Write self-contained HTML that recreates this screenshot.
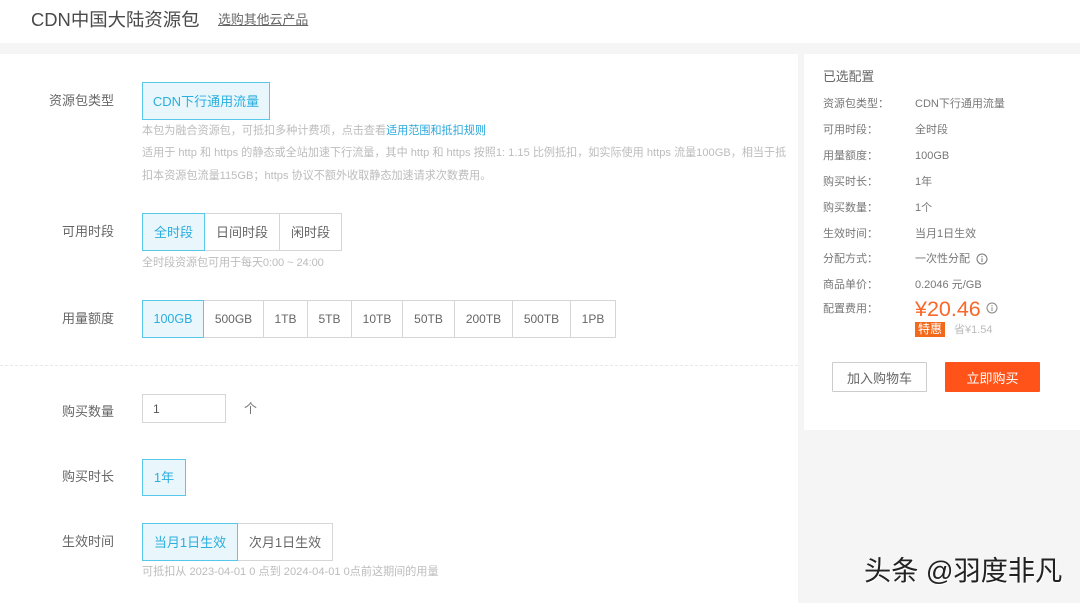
<!DOCTYPE html>
<html lang="zh"><head><meta charset="utf-8"><title>CDN中国大陆资源包</title>
<style>
*{box-sizing:border-box;margin:0;padding:0}
html,body{width:1080px;height:603px;overflow:hidden;background:#f5f5f5}
#w{position:absolute;left:0;top:0;width:1080px;height:603px;filter:blur(.35px);font-family:"Liberation Sans","Noto Sans CJK SC",sans-serif;color:#555}
.p{position:absolute;background:#fff}
.t{position:absolute;white-space:nowrap;line-height:18px}
.l{font-size:13px;color:#666;left:39px;width:75px;text-align:right}
.g{font-size:11.1px;color:#bcbcbc;left:142px}
.b{position:absolute;display:flex;align-items:center;justify-content:center;border:1px solid #d6d6d6;background:#fff;font-size:13px;color:#666;white-space:nowrap;padding-bottom:2px}
.s{font-size:12px;padding-bottom:0}
.n{padding-bottom:0}
.a{border-color:#58c8ea;background:#e9f7fd;color:#2aaede;z-index:2}
.k{font-size:11px;color:#777;left:823px}
.v{font-size:11px;color:#777;left:915px}
</style></head><body><div id="w">
<div class="p" style="left:0;top:0;width:1080px;height:43px"></div>
<div class="p" style="left:0;top:54px;width:798px;height:549px"></div>
<div class="p" style="left:804px;top:54px;width:276px;height:376px"></div>

<div class="t" style="left:31px;top:8px;font-size:18.4px;line-height:24px;color:#4a4a4a">CDN中国大陆资源包</div>
<div class="t" style="left:218px;top:11px;font-size:12.9px;color:#666;text-decoration:underline">选购其他云产品</div>

<div class="t l" style="top:92px">资源包类型</div>
<div class="b a" style="left:142px;top:82px;width:128px;height:38px">CDN下行通用流量</div>
<div class="t g" style="top:122px">本包为融合资源包，可抵扣多种计费项，点击查看<span style="color:#2aa8de">适用范围和抵扣规则</span></div>
<div class="t g" style="top:144px">适用于 http 和 https 的静态或全站加速下行流量，其中 http 和 https 按照1: 1.15 比例抵扣，如实际使用 https 流量100GB，相当于抵</div>
<div class="t g" style="top:167px">扣本资源包流量115GB；https 协议不额外收取静态加速请求次数费用。</div>

<div class="t l" style="top:223px">可用时段</div>
<div class="b a" style="left:142px;top:213px;width:63px;height:38px">全时段</div>
<div class="b" style="left:204px;top:213px;width:76px;height:38px">日间时段</div>
<div class="b" style="left:279px;top:213px;width:63px;height:38px">闲时段</div>
<div class="t g" style="top:254px;letter-spacing:-.1px">全时段资源包可用于每天0:00 ~ 24:00</div>

<div class="t l" style="top:310px">用量额度</div>
<div class="b a n" style="left:142px;top:300px;width:62px;height:38px;font-size:12.5px">100GB</div>
<div class="b s" style="left:203px;top:300px;width:61px;height:38px">500GB</div>
<div class="b s" style="left:263px;top:300px;width:45px;height:38px">1TB</div>
<div class="b s" style="left:307px;top:300px;width:45px;height:38px">5TB</div>
<div class="b s" style="left:351px;top:300px;width:52px;height:38px">10TB</div>
<div class="b s" style="left:402px;top:300px;width:53px;height:38px">50TB</div>
<div class="b s" style="left:454px;top:300px;width:59px;height:38px">200TB</div>
<div class="b s" style="left:512px;top:300px;width:59px;height:38px">500TB</div>
<div class="b s" style="left:570px;top:300px;width:46px;height:38px">1PB</div>

<div style="position:absolute;left:0;top:365px;width:798px;border-top:1px dashed #e8e8e8"></div>

<div class="t l" style="top:403px">购买数量</div>
<div class="b n" style="left:142px;top:394px;width:84px;height:29px;justify-content:flex-start;padding-left:10px;font-size:12px;color:#555">1</div>
<div class="t" style="left:244px;top:400px;font-size:13px;color:#777">个</div>

<div class="t l" style="top:468px">购买时长</div>
<div class="b a" style="left:142px;top:459px;width:44px;height:37px">1年</div>

<div class="t l" style="top:533px">生效时间</div>
<div class="b a" style="left:142px;top:523px;width:96px;height:38px">当月1日生效</div>
<div class="b" style="left:237px;top:523px;width:96px;height:38px">次月1日生效</div>
<div class="t g" style="top:563px">可抵扣从 2023-04-01 0 点到 2024-04-01 0点前这期间的用量</div>

<div class="t" style="left:823px;top:68px;font-size:12.8px;color:#666">已选配置</div>
<div class="t k" style="top:95px">资源包类型：</div><div class="t v" style="top:95px">CDN下行通用流量</div>
<div class="t k" style="top:121px">可用时段：</div><div class="t v" style="top:121px">全时段</div>
<div class="t k" style="top:147px">用量额度：</div><div class="t v" style="top:147px">100GB</div>
<div class="t k" style="top:173px">购买时长：</div><div class="t v" style="top:173px">1年</div>
<div class="t k" style="top:199px">购买数量：</div><div class="t v" style="top:199px">1个</div>
<div class="t k" style="top:225px">生效时间：</div><div class="t v" style="top:225px">当月1日生效</div>
<div class="t k" style="top:250px">分配方式：</div><div class="t v" style="top:250px">一次性分配</div>
<svg style="position:absolute;left:976px;top:253px" width="12" height="12" viewBox="0 0 12 12" fill="none" stroke="#777"><circle cx="6" cy="6" r="5"/><path d="M6 5.2V9M6 3v1.2"/></svg>
<div class="t k" style="top:276px">商品单价：</div><div class="t v" style="top:276px">0.2046 元/GB</div>
<div class="t k" style="top:300px">配置费用：</div>
<div class="t" style="left:915px;top:296px;font-size:21.5px;line-height:26px;color:#f8682a">¥20.46</div>
<svg style="position:absolute;left:986px;top:302px" width="12" height="12" viewBox="0 0 12 12" fill="none" stroke="#888"><circle cx="6" cy="6" r="5"/><path d="M6 5.2V9M6 3v1.2"/></svg>
<div class="t" style="left:915px;top:322px;width:30px;height:15px;background:#f3691c;color:#fff;font-size:12px;line-height:15px;text-align:center">特惠</div>
<div class="t" style="left:954px;top:321px;font-size:11px;color:#bbb">省¥1.54</div>

<div class="b n" style="left:832px;top:362px;width:95px;height:30px;border-color:#ccc;border-radius:1px;font-size:13px">加入购物车</div>
<div class="b n" style="left:945px;top:362px;width:95px;height:30px;background:#ff5319;border-color:#ff5319;color:#fff;border-radius:1px;font-size:13px">立即购买</div>

<div class="t" style="left:864px;top:555px;font-size:27.2px;line-height:32px;color:#222;text-shadow:1px 1px 0 #fff">头条 @羽度非凡</div>
</div></body></html>
